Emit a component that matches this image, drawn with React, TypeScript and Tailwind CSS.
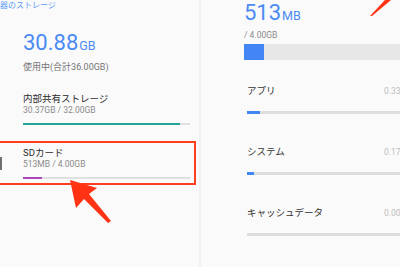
import React from 'react'

const font = "font-['Roboto','Noto_Sans_CJK_JP',sans-serif]"

const StorageRow = ({ title, detail, fill, color, icon }: { title: string; detail: string; fill: number; color: string; icon?: boolean }) => (
  <div className="flex">
    <div className="w-[23px] shrink-0 flex items-center">
      {icon && <div className="w-[2px] h-[13px] bg-[#6f6f6f]" />}
    </div>
    <div className="flex-1 pr-[9px]">
      <div className="text-[9.5px] leading-[12px] text-[#2b2b2b]">{title}</div>
      <div className="text-[8.5px] leading-[11px] text-[#8a8a8a]">{detail}</div>
      <div className="mt-[7px] h-[2px] bg-[#e0e0e0]">
        <div className={`h-full ${color}`} style={{ width: `${fill}%` }} />
      </div>
    </div>
  </div>
)

const UsageRow = ({ label, value, fill }: { label: string; value: string; fill: number }) => (
  <div>
    <div className="flex items-baseline leading-[13px]">
      <div className="w-[137px] shrink-0 text-[9.5px] text-[#333333]">{label}</div>
      <div className="text-[8.5px] text-[#bdbdbd] whitespace-nowrap">{value}</div>
    </div>
    <div className="mt-[13px] h-[3px] w-[240px] bg-[#dedede]">
      <div className="h-full bg-[#4285f4]" style={{ width: `${fill}px` }} />
    </div>
  </div>
)

export default function App() {
  return (
    <div className={`relative w-[400px] h-[267px] overflow-hidden bg-[#fafafa] flex ${font}`}>
      {/* left: storage list */}
      <div className="w-[201px] shrink-0 border-r-2 border-[#f1f1f1]">
        <div className="ml-[-8px] text-[8px] leading-[12px] text-[#5c9af5] whitespace-nowrap">機器のストレージ</div>
        <div className="pl-[23px]">
          <div className="mt-[19px] flex items-baseline leading-[24px] text-[#4a8af4]">
            <span className="text-[22px]">30.88</span>
            <span className="text-[12.5px] ml-[1px]">GB</span>
          </div>
          <div className="mt-[3px] text-[9px] leading-[12px] text-[#757575]">使用中(合計36.00GB)</div>
        </div>
        <div className="mt-[20px]">
          <StorageRow title="内部共有ストレージ" detail="30.37GB / 32.00GB" fill={94} color="bg-[#26a69a]" />
        </div>
        <div className="mt-[22px]">
          <StorageRow title="SDカード" detail="513MB / 4.00GB" fill={11.5} color="bg-[#ab47bc]" icon />
        </div>
      </div>

      {/* right: SD card detail */}
      <div className="flex-1 min-w-0 pl-[43px]">
        <div className="mt-[1px] flex items-baseline leading-[24px] text-[#4a8af4]">
          <span className="text-[22px]">513</span>
          <span className="text-[12.5px] ml-[1px]">MB</span>
        </div>
        <div className="mt-[2px] text-[8.5px] leading-[11px] text-[#8a8a8a] whitespace-nowrap">/ 4.00GB</div>
        <div className="mt-[3px] h-[16px] w-[240px] bg-[#e7e7e7]">
          <div className="h-full w-[20px] bg-[#4285f4]" />
        </div>
        <div className="pl-[3px]">
          <div className="mt-[24px]">
            <UsageRow label="アプリ" value="0.33GB" fill={13} />
          </div>
          <div className="mt-[31px]">
            <UsageRow label="システム" value="0.17GB" fill={7} />
          </div>
          <div className="mt-[31px]">
            <UsageRow label="キャッシュデータ" value="0.00GB" fill={0} />
          </div>
        </div>
      </div>

      {/* annotation: red frame + arrows */}
      <div className="absolute left-[-10px] top-[141px] w-[206px] h-[44px] border-2 border-[#ff3d1f]" />
      <svg className="absolute left-0 top-0 pointer-events-none" width="400" height="267" viewBox="0 0 400 267">
        <polygon points="70,180 97,188 89,194 111,221 108,223 84,199 76,208" fill="#ff3314" />
        <polygon points="370,16 372,16 391,0 385,0" fill="#ff3314" />
      </svg>
    </div>
  )
}
